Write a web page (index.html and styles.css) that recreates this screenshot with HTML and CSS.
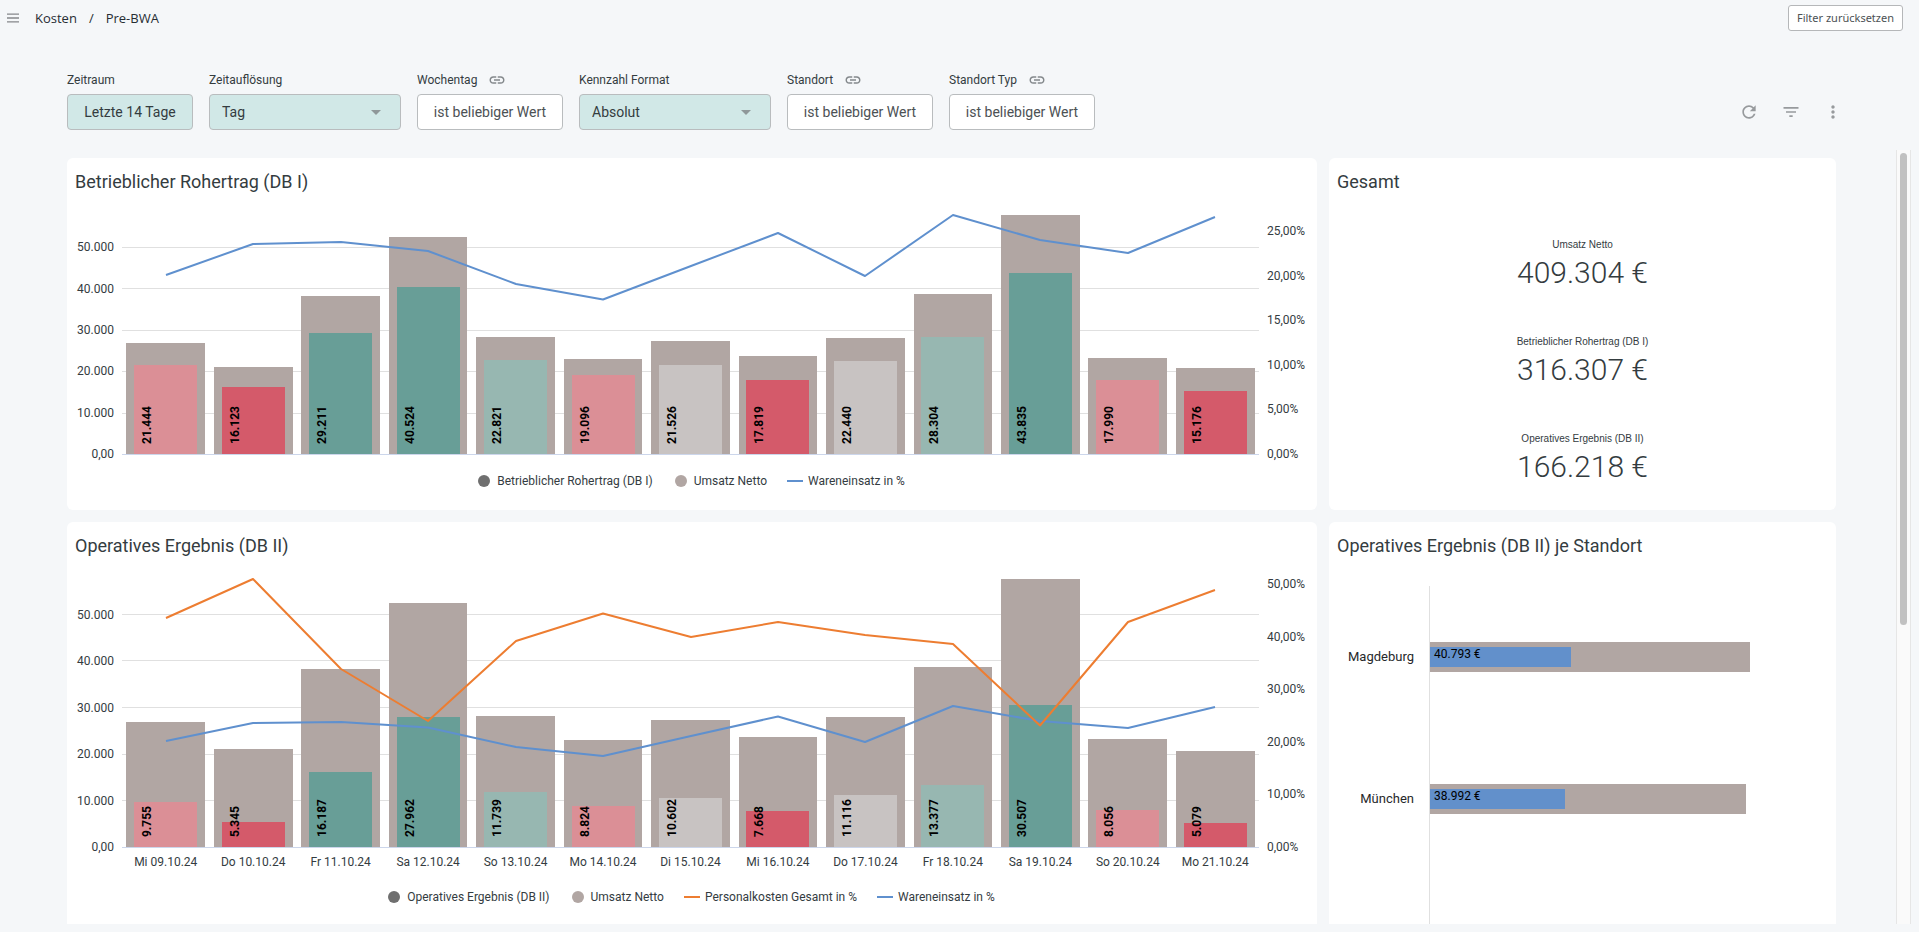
FILE: index.html
```html
<!DOCTYPE html>
<html lang="de">
<head>
<meta charset="utf-8">
<title>Pre-BWA</title>
<link rel="stylesheet" href="styles.css">
</head>
<body>
<header class="topbar">
  <button class="icon-button menu" aria-label="Menü">
    <svg width="12" height="10" viewBox="0 0 12 10"><path d="M0 1.2h12M0 5h12M0 8.8h12" fill="none" stroke="#85888b" stroke-width="1.3"/></svg>
  </button>
  <nav class="crumbs" aria-label="Pfad"><a href="#">Kosten</a><span>/</span><a href="#">Pre-BWA</a></nav>
  <button class="reset">Filter zurücksetzen</button>
</header>

<section class="filters">
  <div class="filter">
    <label for="f-range">Zeitraum</label>
    <button id="f-range" class="field active">Letzte 14 Tage</button>
  </div>
  <div class="filter">
    <label for="f-res">Zeitauflösung</label>
    <div class="select"><select id="f-res" class="field active"><option>Tag</option></select><svg class="caret" viewBox="0 0 10 5"><path d="M0 0h10L5 5z"/></svg></div>
  </div>
  <div class="filter">
    <div class="label-row"><label for="f-day">Wochentag</label><svg class="link" viewBox="0 0 24 24"><path d="M3.900 12c0-1.710 1.390-3.100 3.100-3.100h4V7H7c-2.760 0-5 2.240-5 5s2.240 5 5 5h4v-1.900H7c-1.710 0-3.100-1.390-3.100-3.100zM8 13h8v-2H8v2zm9-6h-4v1.900h4c1.710 0 3.100 1.390 3.100 3.100s-1.390 3.100-3.100 3.100h-4V17h4c2.760 0 5-2.240 5-5s-2.240-5-5-5z"/></svg></div>
    <button id="f-day" class="field">ist beliebiger Wert</button>
  </div>
  <div class="filter">
    <label for="f-fmt">Kennzahl Format</label>
    <div class="select"><select id="f-fmt" class="field active"><option>Absolut</option></select><svg class="caret" viewBox="0 0 10 5"><path d="M0 0h10L5 5z"/></svg></div>
  </div>
  <div class="filter">
    <div class="label-row"><label for="f-loc">Standort</label><svg class="link" viewBox="0 0 24 24"><path d="M3.900 12c0-1.710 1.390-3.100 3.100-3.100h4V7H7c-2.760 0-5 2.240-5 5s2.240 5 5 5h4v-1.900H7c-1.710 0-3.100-1.390-3.100-3.100zM8 13h8v-2H8v2zm9-6h-4v1.900h4c1.710 0 3.100 1.390 3.100 3.100s-1.390 3.100-3.100 3.100h-4V17h4c2.760 0 5-2.240 5-5s-2.240-5-5-5z"/></svg></div>
    <button id="f-loc" class="field">ist beliebiger Wert</button>
  </div>
  <div class="filter">
    <div class="label-row"><label for="f-type">Standort Typ</label><svg class="link" viewBox="0 0 24 24"><path d="M3.900 12c0-1.710 1.390-3.100 3.100-3.100h4V7H7c-2.760 0-5 2.240-5 5s2.240 5 5 5h4v-1.900H7c-1.710 0-3.100-1.390-3.100-3.100zM8 13h8v-2H8v2zm9-6h-4v1.900h4c1.710 0 3.100 1.390 3.100 3.100s-1.390 3.100-3.100 3.100h-4V17h4c2.760 0 5-2.240 5-5s-2.240-5-5-5z"/></svg></div>
    <button id="f-type" class="field">ist beliebiger Wert</button>
  </div>
  <div class="tools">
    <button class="icon-button" aria-label="Neu laden"><svg class="tool" viewBox="0 0 24 24"><path d="M17.650 6.350C16.200 4.900 14.210 4 12 4c-4.420 0-7.990 3.580-7.990 8s3.570 8 7.990 8c3.730 0 6.840-2.550 7.730-6h-2.080c-.82 2.330-3.040 4-5.650 4-3.310 0-6-2.690-6-6s2.690-6 6-6c1.660 0 3.140.69 4.220 1.780L13 11h7V4l-2.350 2.350z"/></svg></button>
    <button class="icon-button" aria-label="Filter"><svg class="tool" viewBox="0 0 24 24"><path d="M10 18h4v-2h-4v2zM3 6v2h18V6H3zm3 7h12v-2H6v2z"/></svg></button>
    <button class="icon-button" aria-label="Mehr"><svg class="tool" viewBox="0 0 24 24"><path d="M12 8c1.100 0 2-.9 2-2s-.9-2-2-2-2 .9-2 2 .9 2 2 2zm0 2c-1.100 0-2 .9-2 2s.9 2 2 2 2-.9 2-2-.9-2-2-2zm0 6c-1.100 0-2 .9-2 2s.9 2 2 2 2-.9 2-2-.9-2-2-2z"/></svg></button>
  </div>
</section>

<div class="scroll-area">
  <main class="board">
    <section class="panel">
      <h2>Betrieblicher Rohertrag (DB I)</h2>
      <div class="chart chart-one">
        <div class="axis left"><span class="sixth">0,00</span><span class="sixth">10.000</span><span class="sixth">20.000</span><span class="sixth">30.000</span><span class="sixth">40.000</span><span class="sixth">50.000</span></div>
        <div class="plot">
          <div class="grid"><i></i><i></i><i></i><i></i><i></i><i></i></div>
          <div class="cols">
            <div class="col"><div class="total" style="height:44.7%"></div><div class="part low" style="height:35.7%"><span>21.444</span></div></div>
            <div class="col"><div class="total" style="height:35.1%"></div><div class="part lowest" style="height:26.9%"><span>16.123</span></div></div>
            <div class="col"><div class="total" style="height:63.9%"></div><div class="part highest" style="height:48.7%"><span>29.211</span></div></div>
            <div class="col"><div class="total" style="height:87.5%"></div><div class="part highest" style="height:67.5%"><span>40.524</span></div></div>
            <div class="col"><div class="total" style="height:47%"></div><div class="part high" style="height:38%"><span>22.821</span></div></div>
            <div class="col"><div class="total" style="height:38.5%"></div><div class="part low" style="height:31.8%"><span>19.096</span></div></div>
            <div class="col"><div class="total" style="height:45.4%"></div><div class="part mid" style="height:35.9%"><span>21.526</span></div></div>
            <div class="col"><div class="total" style="height:39.4%"></div><div class="part lowest" style="height:29.7%"><span>17.819</span></div></div>
            <div class="col"><div class="total" style="height:46.6%"></div><div class="part mid" style="height:37.4%"><span>22.440</span></div></div>
            <div class="col"><div class="total" style="height:64.5%"></div><div class="part high" style="height:47.2%"><span>28.304</span></div></div>
            <div class="col"><div class="total" style="height:96.2%"></div><div class="part highest" style="height:73.1%"><span>43.835</span></div></div>
            <div class="col"><div class="total" style="height:38.6%"></div><div class="part low" style="height:30%"><span>17.990</span></div></div>
            <div class="col"><div class="total" style="height:34.6%"></div><div class="part lowest" style="height:25.3%"><span>15.176</span></div></div>
          </div>
          <svg class="lines" viewBox="0 0 1137 248" preserveAspectRatio="none"><polyline class="goods" points="44,69 131,38 219,36 306,45 394,78 481,93.500 569,60 656,27 743,70 831,9 918,34 1006,47 1093,11"/></svg>
        </div>
        <div class="axis right"><span style="height:17.98%">0,00%</span><span style="height:17.98%">5,00%</span><span style="height:17.98%">10,00%</span><span style="height:17.98%">15,00%</span><span style="height:17.98%">20,00%</span><span style="height:10%">25,00%</span></div>
        <ul class="legend">
          <li><i class="dot result"></i>Betrieblicher Rohertrag (DB I)</li>
          <li><i class="dot net"></i>Umsatz Netto</li>
          <li><i class="dash goods"></i>Wareneinsatz in %</li>
        </ul>
      </div>
    </section>

    <section class="panel">
      <h2>Gesamt</h2>
      <dl class="kpis">
        <div><dt>Umsatz Netto</dt><dd>409.304 €</dd></div>
        <div><dt>Betrieblicher Rohertrag (DB I)</dt><dd>316.307 €</dd></div>
        <div><dt>Operatives Ergebnis (DB II)</dt><dd>166.218 €</dd></div>
      </dl>
    </section>

    <section class="panel">
      <h2>Operatives Ergebnis (DB II)</h2>
      <div class="chart chart-two">
        <div class="axis left"><span class="sixth">0,00</span><span class="sixth">10.000</span><span class="sixth">20.000</span><span class="sixth">30.000</span><span class="sixth">40.000</span><span class="sixth">50.000</span></div>
        <div class="plot">
          <div class="grid"><i></i><i></i><i></i><i></i><i></i><i></i></div>
          <div class="cols">
            <div class="col"><div class="total" style="height:44.7%"></div><div class="part low" style="height:16.3%"><span>9.755</span></div></div>
            <div class="col"><div class="total" style="height:35.1%"></div><div class="part lowest" style="height:8.9%"><span>5.345</span></div></div>
            <div class="col"><div class="total" style="height:63.9%"></div><div class="part highest" style="height:27%"><span>16.187</span></div></div>
            <div class="col"><div class="total" style="height:87.5%"></div><div class="part highest" style="height:46.6%"><span>27.962</span></div></div>
            <div class="col"><div class="total" style="height:47%"></div><div class="part high" style="height:19.6%"><span>11.739</span></div></div>
            <div class="col"><div class="total" style="height:38.5%"></div><div class="part low" style="height:14.7%"><span>8.824</span></div></div>
            <div class="col"><div class="total" style="height:45.4%"></div><div class="part mid" style="height:17.7%"><span>10.602</span></div></div>
            <div class="col"><div class="total" style="height:39.4%"></div><div class="part lowest" style="height:12.8%"><span>7.668</span></div></div>
            <div class="col"><div class="total" style="height:46.6%"></div><div class="part mid" style="height:18.5%"><span>11.116</span></div></div>
            <div class="col"><div class="total" style="height:64.5%"></div><div class="part high" style="height:22.3%"><span>13.377</span></div></div>
            <div class="col"><div class="total" style="height:96.2%"></div><div class="part highest" style="height:50.8%"><span>30.507</span></div></div>
            <div class="col"><div class="total" style="height:38.6%"></div><div class="part low" style="height:13.4%"><span>8.056</span></div></div>
            <div class="col"><div class="total" style="height:34.4%"></div><div class="part lowest" style="height:8.5%"><span>5.079</span></div></div>
          </div>
          <svg class="lines" viewBox="0 0 1137 279" preserveAspectRatio="none"><polyline class="goods" points="44,173 131,155 219,154 306,159.500 394,179 481,188 569,168 656,148.500 743,174 831,138 918,153 1006,160 1093,139"/><polyline class="staff" points="44,50 131,11 219,101 306,153 394,73 481,45.500 569,69 656,54 743,67 831,76 918,157.500 1006,54 1093,22"/></svg>
        </div>
        <div class="axis right"><span style="height:18.85%">0,00%</span><span style="height:18.85%">10,00%</span><span style="height:18.85%">20,00%</span><span style="height:18.85%">30,00%</span><span style="height:18.85%">40,00%</span><span style="height:5%">50,00%</span></div>
        <div class="days"><span>Mi 09.10.24</span><span>Do 10.10.24</span><span>Fr 11.10.24</span><span>Sa 12.10.24</span><span>So 13.10.24</span><span>Mo 14.10.24</span><span>Di 15.10.24</span><span>Mi 16.10.24</span><span>Do 17.10.24</span><span>Fr 18.10.24</span><span>Sa 19.10.24</span><span>So 20.10.24</span><span>Mo 21.10.24</span></div>
        <ul class="legend">
          <li><i class="dot result"></i>Operatives Ergebnis (DB II)</li>
          <li><i class="dot net"></i>Umsatz Netto</li>
          <li><i class="dash staff"></i>Personalkosten Gesamt in %</li>
          <li><i class="dash goods"></i>Wareneinsatz in %</li>
        </ul>
      </div>
    </section>

    <section class="panel">
      <h2>Operatives Ergebnis (DB II) je Standort</h2>
      <div class="sites">
        <div class="site"><span class="name">Magdeburg</span><div class="track"><div class="site-total" style="width:80.4%"></div><div class="site-part" style="width:35.4%">40.793 €</div></div></div>
        <div class="site"><span class="name">München</span><div class="track"><div class="site-total" style="width:79.4%"></div><div class="site-part" style="width:33.9%">38.992 €</div></div></div>
        <div class="site"><span class="name"></span><div class="track"></div></div>
      </div>
    </section>
  </main>
  <div class="scrollbar"><div class="thumb"></div></div>
</div>
</body>
</html>
```

FILE: styles.css
```css
* { box-sizing: border-box; }

body {
  margin: 0;
  height: 100vh;
  padding-bottom: 8px;
  display: flex;
  flex-direction: column;
  overflow: hidden;
  background: #f5f7f9;
  color: #343c3f;
  font: 12px/16px Roboto, "Liberation Sans", sans-serif;
}

button, select { font: inherit; color: inherit; margin: 0; }
h2, ul, dl, dd { margin: 0; padding: 0; }

/* top bar */
.topbar {
  display: flex;
  align-items: center;
  height: 36px;
  padding: 0 16px 0 7px;
}
.icon-button {
  display: flex;
  padding: 0;
  border: 0;
  background: none;
  cursor: pointer;
}
.menu { margin-right: 16px; }
.crumbs {
  display: flex;
  flex: 1;
  gap: 12px;
  font: 13px/18px "Open Sans", sans-serif;
}
.crumbs, .crumbs a { color: #262d33; text-decoration: none; }
.reset {
  height: 26px;
  padding: 0 8px;
  border: 1px solid #b5b7b9;
  border-radius: 3px;
  background: #fff;
  color: #4c5154;
  font: 11px/16px "Noto Sans", sans-serif;
}

/* filter bar */
.filters {
  display: flex;
  align-items: flex-end;
  gap: 16px;
  padding: 36px 76px 0 67px;
}
.filter { display: flex; flex-direction: column; gap: 6px; }
.label-row { display: flex; align-items: center; gap: 11px; height: 16px; }
.link { width: 18px; height: 18px; fill: #84898c; }
.field {
  height: 36px;
  padding: 0 14px;
  border: 1px solid #b9bcbe;
  border-radius: 4px;
  background: #fff;
  font-size: 14px;
  min-width: 126px;
}
button.field:not(.active) { min-width: 146px; color: #4c5154; }
.field.active { background: #d1e8e7; }
.select { display: grid; align-items: center; width: 192px; }
.select > * { grid-area: 1 / 1; }
select.field { appearance: none; width: 100%; padding: 0 12px; }
.caret {
  justify-self: end;
  width: 10px;
  height: 5px;
  margin-right: 20px;
  fill: #8f9799;
  pointer-events: none;
}
.tools { display: flex; gap: 22px; margin-left: auto; padding-bottom: 8px; }
.tool { width: 20px; height: 20px; fill: #979a9d; }

/* dashboard */
.scroll-area {
  display: flex;
  flex: 1;
  min-height: 0;
  margin-top: 20px;
  padding-right: 8px;
  overflow: hidden;
}
.board {
  flex: 1;
  display: grid;
  grid-template-columns: 1250fr 507fr;
  grid-auto-rows: min-content;
  gap: 12px;
  padding: 8px 60px 0 67px;
}
.panel { padding: 12px 8px; background: #fff; border-radius: 6px; min-width: 0; }
.panel h2 { font-size: 18px; line-height: 24px; font-weight: 400; }

.scrollbar {
  width: 15px;
  padding: 3px;
  border: solid #e6e6e6;
  border-width: 0 1px;
  background: #fafafa;
}
.thumb { height: 61.5%; border-radius: 4px; background: #c1c1c1; }

/* combined column and line charts */
.chart {
  display: grid;
  grid-template-columns: 39px 1fr 42px;
  column-gap: 8px;
}
.chart-one { grid-template-rows: 248px; padding: 12px 0 9px; }
.chart-two { grid-template-rows: 279px; padding: 10px 0 9px; }
.axis { display: flex; flex-direction: column-reverse; line-height: 0; }
.axis span { display: flex; align-items: flex-end; }
.left span { justify-content: flex-end; }
.sixth { height: 16.666%; }
.plot { display: grid; border-bottom: 1px solid #ccd6eb; margin-bottom: -1px; }
.plot > * { grid-area: 1 / 1; min-width: 0; min-height: 0; }
.grid { display: flex; flex-direction: column; }
.grid i { flex: 1; border-bottom: 1px solid #e0e0e0; }
.grid i:last-child { border: 0; }
.cols { display: grid; grid-template-columns: repeat(13, 1fr); }
.col { display: grid; grid-template-rows: 100%; align-items: end; justify-items: center; }
.col > * { grid-area: 1 / 1; }
.total { width: 90%; background: #b1a6a3; }
.part { width: 72%; display: flex; align-items: flex-end; padding: 0 0 10px 6px; }
.part span {
  writing-mode: vertical-rl;
  transform: rotate(180deg);
  white-space: nowrap;
  color: #000;
  font-weight: 700;
  line-height: 14px;
}
.lowest { background: #d45a6a; }
.low { background: #db8f96; }
.mid { background: #c8c3c2; }
.high { background: #97b7b1; }
.highest { background: #689e97; }
.lines { width: 100%; height: 100%; fill: none; stroke-width: 2; }
.lines polyline { vector-effect: non-scaling-stroke; stroke-linejoin: round; }
.lines .goods { stroke: #5f90ce; }
.lines .staff { stroke: #ed7d31; }
.days {
  grid-column: 2;
  display: grid;
  grid-template-columns: repeat(13, 1fr);
  padding-top: 7px;
  text-align: center;
  white-space: nowrap;
}
.legend {
  grid-column: 2;
  display: flex;
  justify-content: center;
  gap: 20px;
  padding-top: 19px;
  list-style: none;
}
.legend li { display: flex; align-items: center; gap: 5px; }
.dot { width: 12px; height: 12px; margin: 0 2px; border-radius: 50%; }
.dash { width: 16px; height: 2px; }
.result { background: #6f6f6f; }
.net { background: #b1a6a3; }
.dash.goods { background: #5f90ce; }
.dash.staff { background: #ed7d31; }

/* key figures */
.kpis {
  display: flex;
  flex-direction: column;
  gap: 43px;
  padding-top: 43px;
  text-align: center;
}
.kpis dt { font: 10px/16px "Liberation Sans", sans-serif; }
.kpis dd { padding-top: 2px; font-size: 30px; line-height: 36px; font-weight: 300; }

/* bars per site */
.sites { padding-top: 28px; }
.site { display: grid; grid-template-columns: 77px 1fr; column-gap: 15px; height: 142px; }
.name { align-self: center; text-align: right; color: #26282a; font-size: 13px; }
.track { display: grid; align-items: center; border-left: 1px solid #e0e0e0; }
.track > * { grid-area: 1 / 1; }
.site-total { height: 30px; background: #b1a6a3; }
.site-part {
  height: 20px;
  padding-left: 4px;
  background: #6290cb;
  color: #000;
  font-size: 12px;
  line-height: 14px;
}
```
